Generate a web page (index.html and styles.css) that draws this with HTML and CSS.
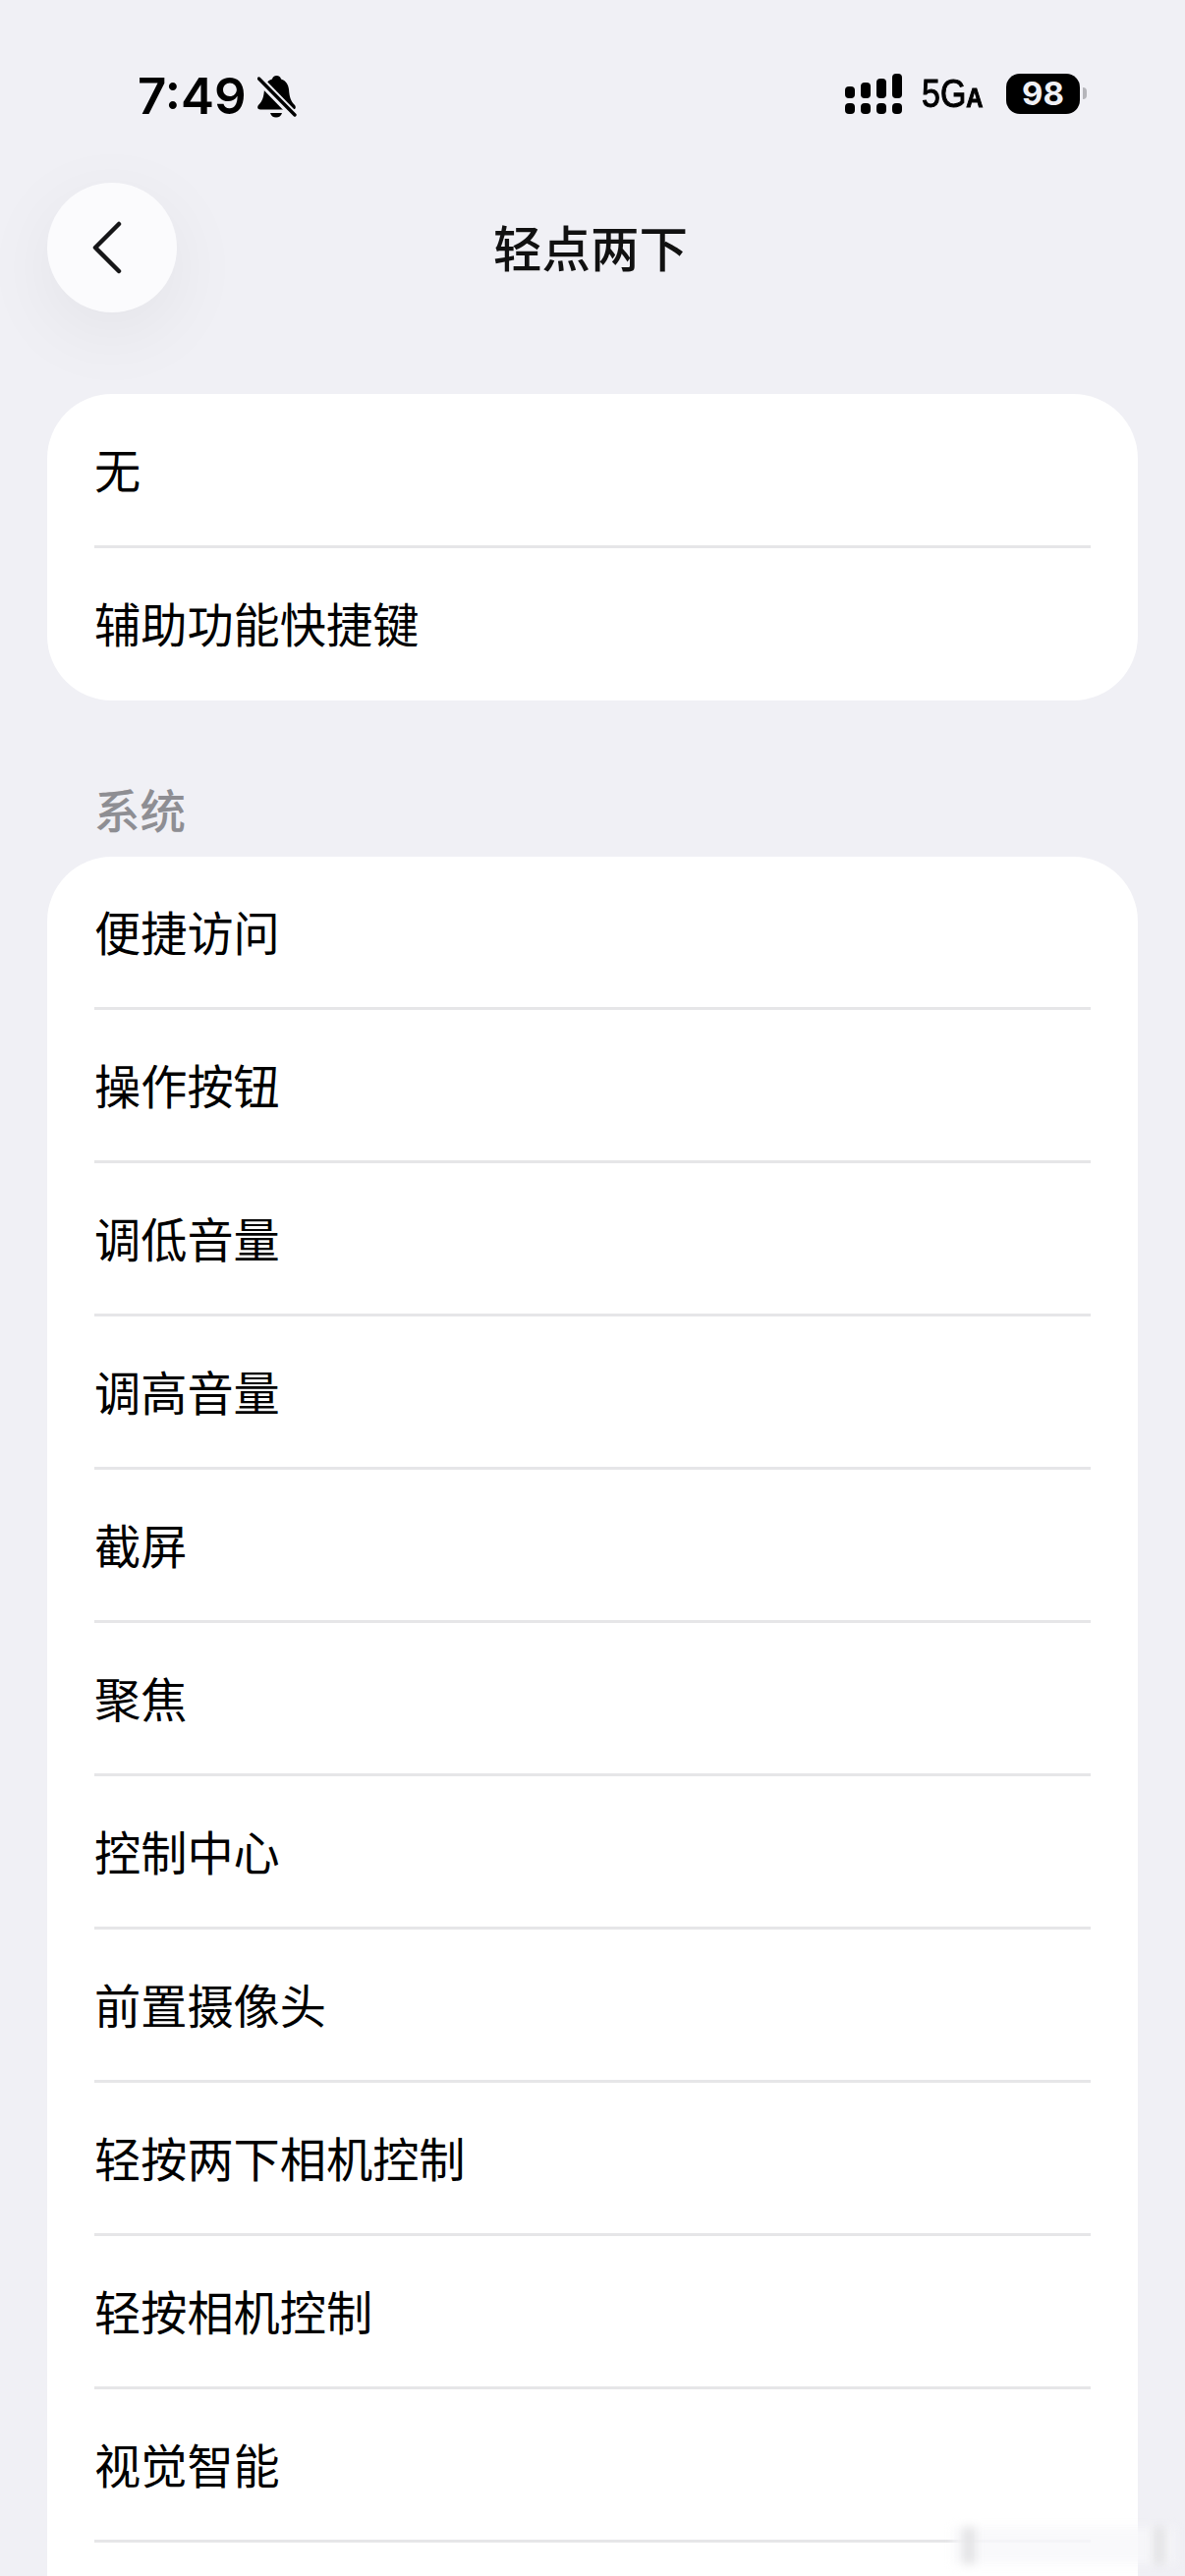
FILE: index.html
```html
<!DOCTYPE html>
<html lang="zh-CN">
<head>
    <meta charset="UTF-8">
    <meta name="viewport" content="width=device-width, initial-scale=1.0">
    <title>轻点两下</title>
    <link rel="stylesheet" href="styles.css">
</head>
<body>
    <div class="status-bar">
        <div class="status-left">
            <span class="time">7:49</span>
            <svg class="bell" viewBox="0 0 40 44" width="40" height="44">
                <path d="M19.500 0 C17 0 15.500 1.500 15 3.500 C10 5 7.500 9 7 14 C6.500 22 5 26 1 30 C-0.500 32 0 34.500 3 34.500 H36 C39 34.500 39.500 32 38 30 C34 26 32.500 22 32 14 C31.500 9 29 5 24 3.500 C23.500 1.500 22 0 19.500 0Z" fill="#000"/>
                <path d="M13 38 H25 C24 41 22 42.500 19 42.500 C16 42.500 14 41 13 38Z" fill="#000"/>
                <path d="M1 3 L38 41" stroke="#f0f0f5" stroke-width="8.500"/>
                <path d="M1.500 3 L38 40" stroke="#000" stroke-width="3.400" stroke-linecap="round"/>
            </svg>
        </div>
        <div class="status-right">
            <svg class="signal" viewBox="0 0 58 42" width="58" height="42">
                <rect x="0" y="13" width="10" height="12" rx="4"/>
                <rect x="16" y="9" width="10" height="16" rx="4"/>
                <rect x="32" y="5" width="10" height="20" rx="4"/>
                <rect x="48" y="0" width="10" height="25" rx="4"/>
                <rect x="0" y="30" width="10" height="11" rx="4"/>
                <rect x="16" y="30" width="10" height="11" rx="4"/>
                <rect x="32" y="30" width="10" height="11" rx="4"/>
                <rect x="48" y="30" width="10" height="11" rx="4"/>
            </svg>
            <span class="network">5G<small>A</small></span>
            <span class="battery">98</span>
            <span class="battery-nub"></span>
        </div>
    </div>

    <div class="nav-bar">
        <button class="back-btn">
            <svg viewBox="0 0 32 54" width="32" height="54">
                <path d="M27 3 L3 27 L27 51" fill="none" stroke="#161618" stroke-width="4.500" stroke-linecap="round" stroke-linejoin="round"/>
            </svg>
        </button>
        <h1>轻点两下</h1>
    </div>

    <div class="card card-first">
        <div class="row">无</div>
        <div class="row">辅助功能快捷键</div>
    </div>

    <div class="section-title">系统</div>
    <div class="card card-open">
        <div class="row">便捷访问</div>
        <div class="row">操作按钮</div>
        <div class="row">调低音量</div>
        <div class="row">调高音量</div>
        <div class="row">截屏</div>
        <div class="row">聚焦</div>
        <div class="row">控制中心</div>
        <div class="row">前置摄像头</div>
        <div class="row">轻按两下相机控制</div>
        <div class="row">轻按相机控制</div>
        <div class="row">视觉智能</div>
        <div class="row"></div>
    </div>

    <!-- blurred-out watermark, bottom right -->
    <div class="smudge">
        <span class="smudge-bar"></span>
        <span class="smudge-bar"></span>
    </div>
</body>
</html>
```

FILE: styles.css
```css
html {
    height: 100%;
}

body {
    font-family: "Noto Sans CJK SC", sans-serif;
    background-color: #f0f0f5;
    color: #000;
    margin: 0;
    height: 2622px;
    overflow: hidden;
    position: relative;
}

.status-bar {
    height: 186px;
    box-sizing: border-box;
    padding: 70px 100px 0 140px;
    display: flex;
    justify-content: space-between;
    align-items: flex-start;
}

.status-left {
    display: flex;
    align-items: center;
    gap: 11px;
}

.time {
    font-family: Inter, sans-serif;
    font-weight: 600;
    font-size: 51px;
    line-height: 56px;
}

.bell {
    margin-top: 2px;
}

.status-right {
    display: flex;
    align-items: center;
    height: 50px;
}

.signal {
    fill: #000;
    margin-top: 2px;
}

.network {
    font-family: "Liberation Sans", sans-serif;
    font-size: 40px;
    margin-left: 20px;
    transform: scaleX(0.85);
    transform-origin: left center;
    width: 86px;
    -webkit-text-stroke: 1px #000;
}

.network small {
    font-size: 28px;
    font-weight: bold;
}

.battery {
    font-family: Inter, sans-serif;
    font-weight: 700;
    font-size: 33px;
    color: #f0f0f5;
    background-color: #000;
    border-radius: 14px;
    width: 75px;
    height: 41px;
    line-height: 41px;
    text-align: center;
}

.battery-nub {
    width: 4px;
    height: 12px;
    background-color: #b5b5ba;
    border-radius: 0 6px 6px 0;
    margin-left: 3px;
}

.nav-bar {
    height: 215px;
    position: relative;
}

.nav-bar h1 {
    margin: 0;
    padding-top: 32px;
    font-size: 49.5px;
    font-weight: 500;
    line-height: 66px;
    text-align: center;
    width: 1202px;
    color: #111;
}

.back-btn {
    position: absolute;
    left: 48px;
    top: 0;
    width: 132px;
    height: 132px;
    padding: 0 8px 0 0;
    border: none;
    border-radius: 50%;
    background-color: #fbfbfd;
    box-shadow: 0 20px 80px rgba(0, 0, 0, 0.06);
    display: flex;
    align-items: center;
    justify-content: center;
}

.card {
    background-color: #fff;
    margin: 0 48px;
    border-radius: 66px;
    overflow: hidden;
}

.card-first {
    height: 312px;
}

.card-open {
    border-radius: 66px 66px 0 0;
    height: 1800px;
}

.row {
    height: 153px;
    margin: 0 48px;
    font-size: 47.2px;
    line-height: 151px;
    border-bottom: 3px solid #e6e6e8;
}

.card-first .row {
    height: 154px;
}

.card-first .row:last-child {
    border-bottom: none;
}

.section-title {
    margin: 83px 0 0 96px;
    height: 76px;
    font-size: 46.5px;
    line-height: 54px;
    font-weight: 500;
    color: #8e8e93;
}

.smudge {
    position: absolute;
    left: 970px;
    top: 2572px;
    width: 226px;
    height: 38px;
    box-sizing: border-box;
    padding: 0 10px;
    display: flex;
    justify-content: space-between;
    background-color: rgba(248, 248, 250, 0.8);
    filter: blur(5px);
}

.smudge-bar {
    width: 12px;
    height: 38px;
    background-color: #e2e2e4;
}
```
